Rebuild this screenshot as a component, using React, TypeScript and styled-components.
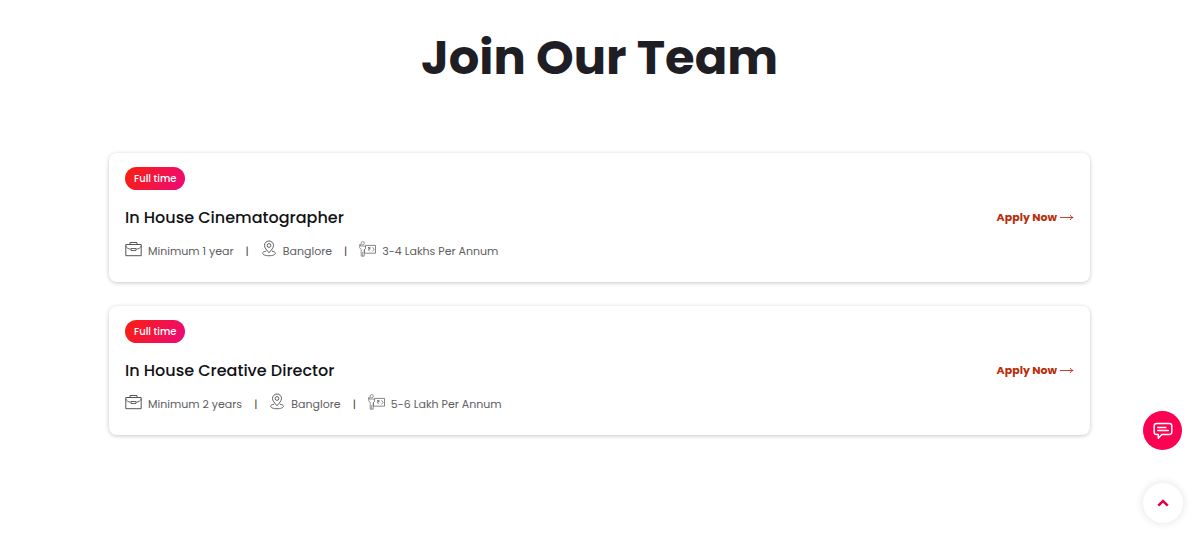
import React from "react";
import styled, { createGlobalStyle } from "styled-components";

const GlobalStyle = createGlobalStyle`
  *, *::before, *::after { box-sizing: border-box; }
  body {
    margin: 0;
    background: #fff;
    color: #212529;
    font-family: Poppins, Inter, "Liberation Sans", sans-serif;
  }
`;

const Page = styled.main`
  padding: 20px 24px 100px;
`;

const Heading = styled.h2`
  margin: 0 0 58px;
  color: #1f1e25;
  font-size: 48px;
  line-height: 75px;
  font-weight: 700;
  text-align: center;
`;

const JobList = styled.div`
  display: flex;
  flex-direction: column;
  gap: 24px;
  max-width: 981px;
  margin: 0 auto;
`;

const Card = styled.article`
  display: flex;
  align-items: center;
  justify-content: space-between;
  gap: 24px;
  padding: 14px 16px 16px;
  border-radius: 8px;
  background: #fff;
  box-shadow: 0 1px 4px rgba(0, 0, 0, 0.22);
`;

const Badge = styled.div`
  width: fit-content;
  padding: 0 9px;
  border-radius: 12px;
  background: linear-gradient(120deg, #f9200c, #ee0979);
  color: #fff;
  font-size: 10px;
  line-height: 23px;
  font-weight: 500;
`;

const JobTitle = styled.h3`
  margin: 15px 0 9px;
  color: #111216;
  font-size: 16px;
  line-height: 26px;
  font-weight: 500;
`;

const MetaList = styled.ul`
  display: flex;
  flex-wrap: wrap;
  margin: 0 0 5px;
  padding: 0;
  list-style: none;
  color: #5d5d60;
  font-size: 11px;
  line-height: 20px;
`;

const MetaItem = styled.li`
  display: flex;
  align-items: center;
  gap: 6px;

  & + &::before {
    content: "|";
    margin: 0 6px 0 12px;
    color: #444;
  }

  svg {
    margin-bottom: 4px;
  }
`;

const ApplyLink = styled.a`
  display: flex;
  align-items: center;
  gap: 3px;
  color: #b82e0b;
  font-size: 11px;
  line-height: 20px;
  font-weight: 700;
  text-decoration: none;
  white-space: nowrap;
`;

const FloatingActions = styled.div`
  position: fixed;
  right: 16px;
  bottom: 23px;
  display: flex;
  flex-direction: column;
  align-items: flex-start;
  gap: 33px;
`;

const RoundButton = styled.button<{ $filled?: boolean }>`
  display: flex;
  align-items: center;
  justify-content: center;
  width: ${(p) => (p.$filled ? "39px" : "40px")};
  height: ${(p) => (p.$filled ? "39px" : "40px")};
  padding: 0;
  border: 0;
  border-radius: 50%;
  cursor: pointer;
  color: ${(p) => (p.$filled ? "#fff" : "#e4004f")};
  background: ${(p) => (p.$filled ? "#fb0252" : "#fff")};
  box-shadow: ${(p) => (p.$filled ? "none" : "0 0 8px rgba(0, 0, 0, 0.12)")};
`;

const BriefcaseIcon = () => (
  <svg width="17" height="16" viewBox="0 0 17 16" fill="none" stroke="#555" aria-hidden="true">
    <path d="M.8 3.500h15.400v11.200H.8zM5 3.300V1.500h7v1.800" />
    <path d="M.8 5c.8 2 2.400 3 5 3.200M16.200 5c-.8 2-2.400 3-5 3.200M6 7.500h5v2H6z" strokeWidth=".9" />
  </svg>
);

const PinIcon = () => (
  <svg width="16" height="17" viewBox="0 0 17 17" fill="none" stroke="#555" aria-hidden="true">
    <path d="M8.500 13C6 10 3.700 7.800 3.700 5.300a4.800 4.800 0 0 1 9.600 0C13.300 7.800 11 10 8.500 13z" />
    <circle cx="8.500" cy="5.300" r="2" />
    <path d="M5.500 11.300c-2.300.4-3.800 1.200-3.800 2.300 0 1.500 3 2.600 6.800 2.600s6.800-1.100 6.800-2.600c0-1.100-1.500-1.900-3.800-2.300" />
  </svg>
);

const SalaryIcon = () => (
  <svg width="17" height="16" viewBox="0 0 17 16" fill="none" stroke="#777" strokeWidth=".8" aria-hidden="true">
    <circle cx="3.700" cy="2.200" r="1.600" />
    <path d="M.6 3.500v3.200l1.600 1.800v6.700h3V8.500M2 5h3.500l1 1M.6 3.500h.9v2M3.700 11v4" />
    <path d="M6.500 4.400h10v7.800H5.500V8M6.500 4.400V8" stroke="#666" />
    <path d="M9 6.500h2.600M9 7.700h2.600M9.300 6.500c1.800 0 1.800 2.200 0 2.200l1.400 1.500M13.500 6.200l1.600 2.100-1.600 2.100" stroke="#666" strokeWidth=".7" />
  </svg>
);

const ArrowIcon = () => (
  <svg width="14" height="8" viewBox="0 0 14 8" fill="none" stroke="currentColor" strokeWidth=".9" aria-hidden="true">
    <path d="M0 4.500h13M10.300 2c.4 1.400 1.400 2.200 2.900 2.500-1.500.3-2.500 1.100-2.900 2.500" />
  </svg>
);

const ChatIcon = () => (
  <svg width="20" height="18" viewBox="0 0 20 18" fill="none" stroke="currentColor" strokeWidth="1.500" strokeLinecap="round" strokeLinejoin="round" aria-hidden="true">
    <path d="M3.500 1.500h13a2.300 2.300 0 0 1 2.300 2.300v6.400a2.300 2.300 0 0 1-2.300 2.300H8.800L5.300 16.300v-3.800H3.500a2.300 2.300 0 0 1-2.300-2.300V3.800a2.300 2.300 0 0 1 2.300-2.300z" />
    <path d="M4.800 5.500h8M4.800 8.500h10.500" />
  </svg>
);

const ChevronIcon = () => (
  <svg width="12" height="8" viewBox="0 0 12 8" fill="none" stroke="currentColor" strokeWidth="2.600" aria-hidden="true">
    <path d="M1.300 6.700 6 2l4.700 4.700" />
  </svg>
);

const jobs = [
  { title: "In House Cinematographer", experience: "Minimum 1 year", location: "Banglore", salary: "3-4 Lakhs Per Annum" },
  { title: "In House Creative Director", experience: "Minimum 2 years", location: "Banglore", salary: "5-6 Lakh Per Annum" },
];

export default function App() {
  return (
    <>
      <GlobalStyle />
      <Page>
        <Heading>Join Our Team</Heading>
        <JobList>
          {jobs.map((job) => (
            <Card key={job.title}>
              <div>
                <Badge>Full time</Badge>
                <JobTitle>{job.title}</JobTitle>
                <MetaList>
                  <MetaItem><BriefcaseIcon />{job.experience}</MetaItem>
                  <MetaItem><PinIcon />{job.location}</MetaItem>
                  <MetaItem><SalaryIcon />{job.salary}</MetaItem>
                </MetaList>
              </div>
              <ApplyLink href="#apply">Apply Now<ArrowIcon /></ApplyLink>
            </Card>
          ))}
        </JobList>
      </Page>
      <FloatingActions>
        <RoundButton $filled type="button" aria-label="Open chat"><ChatIcon /></RoundButton>
        <RoundButton type="button" aria-label="Back to top"><ChevronIcon /></RoundButton>
      </FloatingActions>
    </>
  );
}
